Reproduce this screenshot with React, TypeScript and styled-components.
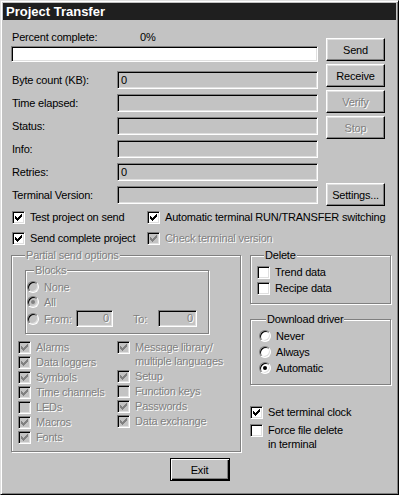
import React from 'react';
import styled, { createGlobalStyle, css } from 'styled-components';

const GlobalStyle = createGlobalStyle`
  html, body {
    margin: 0;
    padding: 0;
    background: #c3c3c3;
  }
  body {
    font-family: "Liberation Sans", Arial, sans-serif;
    font-size: 11px;
    letter-spacing: -0.2px;
    color: #000;
  }
`;

const sunken = css`
  box-sizing: border-box;
  border: 1px solid;
  border-color: #808080 #fff #fff #808080;
  box-shadow: inset 1px 1px 0 #000, inset -1px -1px 0 #dfdfdf;
`;

const embossed = css`
  color: #808080;
  text-shadow: 1px 1px 0 #fff;
`;

const Window = styled.div`
  box-sizing: border-box;
  width: 399px;
  height: 495px;
  padding: 2px;
  border: 1px solid;
  border-color: #dfdfdf #000 #000 #dfdfdf;
  box-shadow: inset 1px 1px 0 #fff, inset -1px -1px 0 #808080;
  background: #c3c3c3;
  display: flex;
  flex-direction: column;
`;

const TitleBar = styled.div`
  height: 17px;
  line-height: 17px;
  padding-left: 3px;
  background: #1f1f1f;
  color: #fff;
  font-weight: bold;
  font-size: 13px;
  letter-spacing: 0;
`;

const Body = styled.div`
  display: flex;
  flex-direction: column;
  padding: 10px 8px 0 8px;
`;

const TopGrid = styled.div`
  display: grid;
  grid-template-columns: 307px 59px;
  column-gap: 8px;
`;

const Column = styled.div`
  display: flex;
  flex-direction: column;
`;

const PercentRow = styled.div`
  display: flex;
  height: 14px;
  line-height: 14px;
`;

const PercentLabel = styled.span`
  width: 128px;
  padding-left: 1px;
`;

const Progress = styled.div`
  ${sunken};
  margin-top: 2px;
  height: 16px;
  background: #fff;
`;

const FieldList = styled.div`
  display: flex;
  flex-direction: column;
  gap: 5px;
  margin-top: 9px;
`;

const FieldRow = styled.div`
  display: flex;
  align-items: center;
  height: 18px;
`;

const FieldLabel = styled.span`
  box-sizing: border-box;
  width: 106px;
  padding-left: 1px;
`;

const Field = styled.div<{ $w?: number; $right?: boolean; $disabled?: boolean }>`
  ${sunken};
  width: ${p => p.$w ?? 201}px;
  height: ${p => (p.$w ? 17 : 18)}px;
  line-height: ${p => (p.$w ? 15 : 16)}px;
  padding: 0 3px 0 3px;
  background: #c3c3c3;
  text-align: ${p => (p.$right ? 'right' : 'left')};
  ${p => p.$disabled && embossed};
`;

const ButtonCol = styled.div`
  display: flex;
  flex-direction: column;
  gap: 3px;
  padding-top: 8px;
`;

const Button = styled.button<{ $default?: boolean; $bottom?: boolean }>`
  box-sizing: border-box;
  width: 59px;
  height: 23px;
  padding: 0;
  font-family: inherit;
  font-size: 11px;
  letter-spacing: -0.2px;
  color: #000;
  background: #c3c3c3;
  border: 1px solid;
  border-color: #fff #000 #000 #fff;
  box-shadow: inset -1px -1px 0 #808080, inset 1px 1px 0 #dfdfdf;
  &:disabled {
    ${embossed};
  }
  ${p =>
    p.$bottom &&
    css`
      margin-top: auto;
      margin-bottom: -2px;
    `}
  ${p =>
    p.$default &&
    css`
      width: 60px;
      border-color: #000;
      box-shadow: inset 1px 1px 0 #fff, inset -1px -1px 0 #000, inset -2px -2px 0 #808080;
    `}
`;

const OptionGrid = styled.div`
  display: grid;
  grid-template-columns: 135px auto;
  grid-auto-rows: 17px;
  row-gap: 4px;
  margin-top: 5px;
  padding-left: 1px;
`;

const Item = styled.label<{ $h?: number; $disabled?: boolean }>`
  display: flex;
  align-items: flex-start;
  gap: 5px;
  line-height: ${p => p.$h ?? 15}px;
  white-space: nowrap;
  ${p => p.$disabled && embossed};
  & > span:first-child {
    margin-top: ${p => ((p.$h ?? 15) - 13) / 2}px;
  }
`;

const Box = styled.span<{ $disabled?: boolean }>`
  ${sunken};
  flex: none;
  display: block;
  width: 13px;
  height: 13px;
  background: ${p => (p.$disabled ? '#c3c3c3' : '#fff')};
  text-shadow: none;
`;

const Round = styled.span<{ $disabled?: boolean; $on?: boolean }>`
  ${sunken};
  flex: none;
  position: relative;
  display: block;
  width: 12px;
  height: 12px;
  border-radius: 50%;
  background: ${p => (p.$disabled ? '#c3c3c3' : '#fff')};
  &::after {
    content: '';
    display: ${p => (p.$on ? 'block' : 'none')};
    position: absolute;
    left: 3px;
    top: 3px;
    width: 4px;
    height: 4px;
    border-radius: 50%;
    background: ${p => (p.$disabled ? '#808080' : '#000')};
  }
`;

const BottomGrid = styled.div`
  display: grid;
  grid-template-columns: 230px 141px;
  column-gap: 9px;
  margin-top: 1px;
  align-items: start;
`;

const Group = styled.fieldset<{ $pad: string }>`
  margin: 0;
  min-width: 0;
  padding: ${p => p.$pad};
  border: 1px solid #808080;
  box-shadow: inset 1px 1px 0 #fff, 1px 1px 0 #fff;
`;

const Legend = styled.legend<{ $disabled?: boolean }>`
  margin-left: 7px;
  padding: 0 1px;
  line-height: 14px;
  background: #c3c3c3;
  ${p => p.$disabled && embossed};
`;

const BlocksGroup = styled(Group)`
  width: 184px;
  box-sizing: border-box;
  margin-left: 7px;
`;

const FromRow = styled.div`
  display: flex;
  align-items: center;
  height: 17px;
  gap: 5px;
  ${embossed};
`;

const FromLabel = styled.span<{ $w: number; $ml?: number }>`
  width: ${p => p.$w}px;
  margin-left: ${p => p.$ml ?? 0}px;
  margin-right: -5px;
`;

const PartsGrid = styled.div`
  display: grid;
  grid-template-columns: 99px auto;
  margin-top: 6px;
`;

const Stack = styled.div<{ $mt?: number }>`
  display: flex;
  flex-direction: column;
  margin-top: ${p => p.$mt ?? 0}px;
`;

const Footer = styled.div`
  display: flex;
  justify-content: center;
  margin-top: 6px;
`;

const CheckMark = ({ color }: { color: string }) => (
  <svg width="11" height="11" viewBox="1 1 11 11" style={{ display: 'block' }} shapeRendering="crispEdges">
    <path
      fill={color}
      d="M9 3h1v1h-1z M8 4h2v1h-2z M3 5h1v1h-1z M7 5h3v1h-3z M3 6h2v1h-2z M6 6h3v1h-3z M3 7h5v1h-5z M4 8h3v1h-3z M5 9h1v1h-1z"
    />
  </svg>
);

type CheckProps = {
  label: React.ReactNode;
  checked?: boolean;
  disabled?: boolean;
  h?: number;
};

const Check = ({ label, checked, disabled, h }: CheckProps) => (
  <Item $h={h} $disabled={disabled}>
    <Box $disabled={disabled}>{checked && <CheckMark color={disabled ? '#808080' : '#000'} />}</Box>
    <span>{label}</span>
  </Item>
);

const Radio = ({ label, on, disabled, h }: { label: string; on?: boolean; disabled?: boolean; h?: number }) => (
  <Item $h={h} $disabled={disabled}>
    <Round $disabled={disabled} $on={on} />
    <span>{label}</span>
  </Item>
);

const fields = [
  { label: 'Byte count (KB):', value: '0' },
  { label: 'Time elapsed:', value: '' },
  { label: 'Status:', value: '' },
  { label: 'Info:', value: '' },
  { label: 'Retries:', value: '0' },
  { label: 'Terminal Version:', value: '' },
];

const leftParts = [
  { label: 'Alarms', checked: true },
  { label: 'Data loggers', checked: true },
  { label: 'Symbols', checked: true },
  { label: 'Time channels', checked: true },
  { label: 'LEDs', checked: false },
  { label: 'Macros', checked: true },
  { label: 'Fonts', checked: true },
];

const rightParts = [
  { label: 'Setup', checked: true },
  { label: 'Function keys', checked: false },
  { label: 'Passwords', checked: true },
  { label: 'Data exchange', checked: true },
];

export default function App() {
  return (
    <>
      <GlobalStyle />
      <Window>
        <TitleBar>Project Transfer</TitleBar>
        <Body>
          <TopGrid>
            <Column>
              <PercentRow>
                <PercentLabel>Percent complete:</PercentLabel>
                <span>0%</span>
              </PercentRow>
              <Progress />
              <FieldList>
                {fields.map(f => (
                  <FieldRow key={f.label}>
                    <FieldLabel>{f.label}</FieldLabel>
                    <Field>{f.value}</Field>
                  </FieldRow>
                ))}
              </FieldList>
            </Column>
            <ButtonCol>
              <Button>Send</Button>
              <Button>Receive</Button>
              <Button disabled>Verify</Button>
              <Button disabled>Stop</Button>
              <Button $bottom>Settings...</Button>
            </ButtonCol>
          </TopGrid>

          <OptionGrid>
            <Check h={17} checked label="Test project on send" />
            <Check h={17} checked label="Automatic terminal RUN/TRANSFER switching" />
            <Check h={17} checked label="Send complete project" />
            <Check h={17} checked disabled label="Check terminal version" />
          </OptionGrid>

          <BottomGrid>
            <Group $pad="1px 6px 6px 6px">
              <Legend $disabled>Partial send options</Legend>
              <BlocksGroup $pad="3px 1px 6px 1px">
                <Legend $disabled>Blocks</Legend>
                <Radio disabled label="None" />
                <Radio disabled on label="All" />
                <FromRow>
                  <Round $disabled />
                  <FromLabel $w={32}>From:</FromLabel>
                  <Field $w={37} $right $disabled>0</Field>
                  <FromLabel $w={25} $ml={15}>To:</FromLabel>
                  <Field $w={39} $right $disabled>0</Field>
                </FromRow>
              </BlocksGroup>
              <PartsGrid>
                <Stack>
                  {leftParts.map(p => (
                    <Check key={p.label} disabled checked={p.checked} label={p.label} />
                  ))}
                </Stack>
                <Stack>
                  <Check
                    disabled
                    checked
                    h={14}
                    label={
                      <>
                        Message library/
                        <br />
                        multiple languages
                      </>
                    }
                  />
                  <Stack $mt={1}>
                    {rightParts.map(p => (
                      <Check key={p.label} disabled checked={p.checked} label={p.label} />
                    ))}
                  </Stack>
                </Stack>
              </PartsGrid>
            </Group>

            <Column>
              <Group $pad="2px 6px 7px 6px">
                <Legend>Delete</Legend>
                <Check h={16} label="Trend data" />
                <Check h={16} label="Recipe data" />
              </Group>
              <Stack $mt={8}>
                <Group $pad="2px 8px 7px 8px">
                  <Legend>Download driver</Legend>
                  <Radio h={16} label="Never" />
                  <Radio h={16} label="Always" />
                  <Radio h={17} on label="Automatic" />
                </Group>
              </Stack>
              <Stack $mt={19}>
                <Check h={16} checked label="Set terminal clock" />
                <Stack $mt={3}>
                  <Check
                    h={14}
                    label={
                      <>
                        Force file delete
                        <br />
                        in terminal
                      </>
                    }
                  />
                </Stack>
              </Stack>
            </Column>
          </BottomGrid>

          <Footer>
            <Button $default>Exit</Button>
          </Footer>
        </Body>
      </Window>
    </>
  );
}
